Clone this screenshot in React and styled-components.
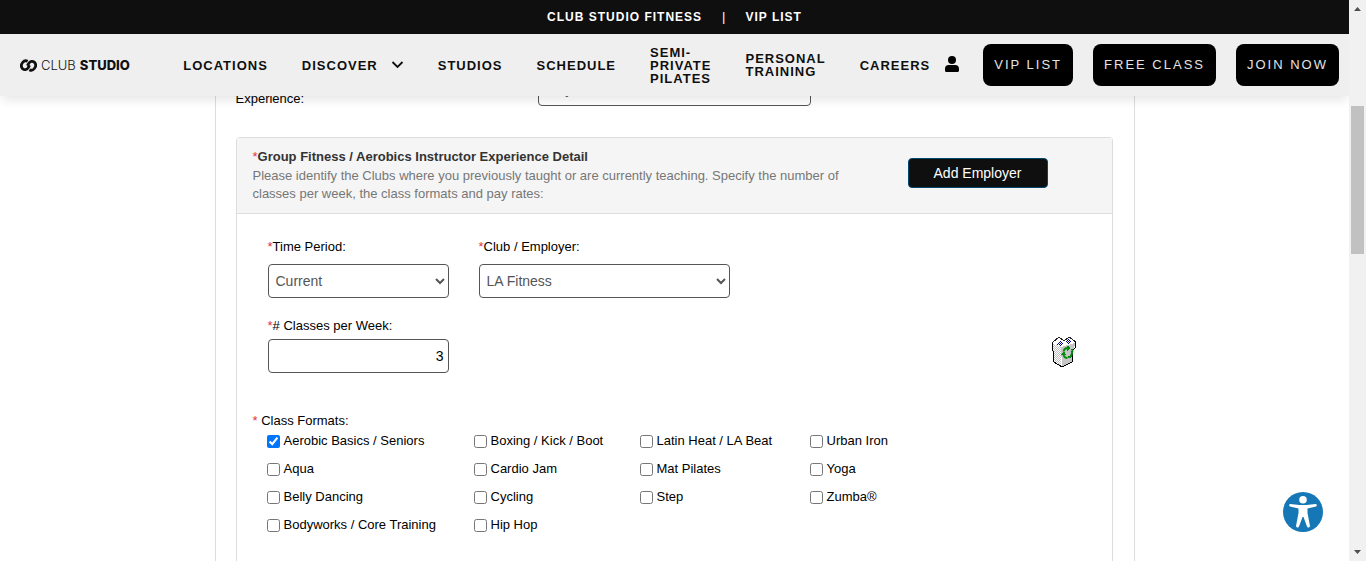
import React from "react";
import styled, { createGlobalStyle } from "styled-components";

const GlobalStyle = createGlobalStyle`
  *, *::before, *::after { box-sizing: border-box; }
  body {
    margin: 0;
    background: #fff;
    color: #000;
    font-family: "Liberation Sans", Arial, sans-serif;
    font-size: 13px;
    line-height: 18px;
  }
`;

const Shell = styled.div`
  display: flex;
  height: 100vh;
  overflow: hidden;
`;

const Page = styled.div`
  flex: 1;
  min-width: 0;
  display: flex;
  flex-direction: column;
  overflow: hidden;
`;

const Header = styled.header`
  position: relative;
  z-index: 2;
  flex: none;
  box-shadow: 0 6px 10px -2px rgba(0, 0, 0, 0.1);
`;

const TopBar = styled.div`
  display: flex;
  justify-content: center;
  align-items: center;
  gap: 20px;
  height: 34px;
  background: #0f0f0f;
  color: #fff;
`;

const TopLink = styled.a`
  color: inherit;
  font: 700 12px/18px "Liberation Sans", Arial, sans-serif;
  letter-spacing: 1px;
  text-decoration: none;
`;

const NavBar = styled.div`
  display: flex;
  align-items: center;
  height: 62px;
  padding: 0 10px 0 20px;
  background: #efefef;
`;

const Logo = styled.a`
  display: flex;
  align-items: center;
  gap: 4px;
  color: #111;
  font: 300 13px/16px Inter, sans-serif;
  text-decoration: none;
  white-space: nowrap;
`;

const LogoStrong = styled.span`
  font-weight: 800;
`;

const NavLinks = styled.nav`
  display: flex;
  align-items: center;
  gap: 34px;
  margin-left: auto;
`;

const NavLink = styled.a`
  display: flex;
  align-items: center;
  gap: 13px;
  color: #0f0f0f;
  font: 700 13px/13px "Liberation Sans", Arial, sans-serif;
  letter-spacing: 1px;
  text-decoration: none;
  white-space: nowrap;
`;

const Account = styled.a`
  display: flex;
  margin: 0 24px 0 15px;
  color: #000;
`;

const Actions = styled.div`
  display: flex;
  gap: 20px;
`;

const ActionButton = styled.button`
  height: 42px;
  padding: 0 11px;
  border: 0;
  border-radius: 8px;
  background: #000;
  color: #e4e4e4;
  font: 400 13px/18px "Liberation Sans", Arial, sans-serif;
  letter-spacing: 2px;
  white-space: nowrap;
`;

const Content = styled.main`
  flex: 1;
  display: flex;
  flex-direction: column;
  width: 100%;
  max-width: 920px;
  margin: -24px auto 0;
  padding: 0 21px 0 20px;
  border: solid #ddd;
  border-width: 0 1px;
`;

const ExperienceRow = styled.div`
  display: grid;
  grid-template-columns: 302px 273px;
  align-items: start;
  margin-bottom: 29px;
`;

const Label = styled.label`
  display: block;
`;

const ExperienceLabel = styled(Label)`
  padding-top: 18px;
`;

const Star = styled.span`
  color: #dc3545;
  font-weight: 400;
`;

const Select = styled.select`
  width: 100%;
  height: 34px;
  padding: 0 3px;
  border: 1px solid #555;
  border-radius: 4px;
  background: #fff;
  color: #555;
  font: 14px/20px "Liberation Sans", Arial, sans-serif;
`;

const NumberBox = styled.input`
  width: 100%;
  height: 34px;
  padding: 0 4px;
  border: 1px solid #555;
  border-radius: 4px;
  font: 14px/20px "Liberation Sans", Arial, sans-serif;
  text-align: right;
`;

const Card = styled.section`
  flex: 1;
  border: 1px solid #ddd;
  border-bottom: 0;
  border-radius: 4px 4px 0 0;
`;

const CardHeader = styled.div`
  display: flex;
  justify-content: space-between;
  align-items: center;
  padding: 10px 64px 10px 16px;
  border-bottom: 1px solid #ddd;
  background: #f5f5f5;
`;

const Intro = styled.div`
  max-width: 600px;
  color: #777;
`;

const Title = styled.h2`
  margin: 0 0 1px;
  color: #333;
  font-size: 13px;
  line-height: 18px;
`;

const AddButton = styled.button`
  width: 140px;
  height: 30px;
  margin-bottom: 6px;
  padding: 0;
  border: 1px solid #00486f;
  border-radius: 4px;
  background: #0f0f0f;
  color: #fff;
  font: 14px/20px "Liberation Sans", Arial, sans-serif;
`;

const CardBody = styled.div`
  padding: 24px 31px 0;
`;

const FieldRow = styled.div`
  display: grid;
  grid-template-columns: 181px 251px;
  gap: 30px;
  margin-bottom: 19px;
`;

const ClassesRow = styled.div`
  display: flex;
  justify-content: space-between;
  align-items: flex-end;
  margin-bottom: 39px;
`;

const Field = styled.div`
  display: flex;
  flex-direction: column;
  gap: ${(p) => p.$gap || 8}px;
  ${(p) => p.$width && `width: ${p.$width}px;`}
`;

const DeleteButton = styled.button`
  display: flex;
  margin: 0 4px 5px 0;
  padding: 0;
  border: 0;
  background: none;
`;

const Formats = styled.fieldset`
  margin: 0 0 0 -15px;
  padding: 0;
  border: 0;
`;

const Legend = styled.legend`
  padding: 0;
  margin-bottom: 2px;
`;

const FormatGrid = styled.div`
  display: grid;
  grid-template-columns: 207px 166px 170px 170px;
  row-gap: 10px;
  padding-left: 14px;
`;

const FormatOption = styled.label`
  display: flex;
  align-items: center;
  gap: 4px;
`;

const Checkbox = styled.input`
  width: 13px;
  height: 13px;
  margin: 0;
`;

const AccessButton = styled.button`
  position: fixed;
  right: 43px;
  bottom: 29px;
  display: flex;
  padding: 0;
  border: 0;
  border-radius: 50%;
  background: none;
`;

const Scrollbar = styled.div`
  display: flex;
  flex-direction: column;
  align-items: center;
  flex: none;
  width: 17px;
  background: #f1f1f1;
`;

const ScrollSpace = styled.div`
  flex: ${(p) => p.$grow};
`;

const Thumb = styled.div`
  flex: none;
  width: 13px;
  height: 148px;
  background: #c1c1c1;
`;

const Arrow = ({ down }) => (
  <svg width="17" height="17" viewBox="0 0 17 17" aria-hidden="true">
    <path d={down ? "M5 6h7L8.500 10z" : "M5 11h7L8.500 7z"} fill="#505050" />
  </svg>
);

const LogoMark = () => (
  <svg width="17" height="13" viewBox="0 0 17 13" fill="none" stroke="#111" strokeWidth="2.800" aria-hidden="true">
    <path d="M7.600 2.300C5.600 1.100 3.800 2 2.600 3.500 1 5.500 1 8 2.600 9.700 4.400 11.400 6.700 10.800 8 9L9.600 6.200" />
    <path d="M9.400 10.700C11.400 11.900 13.200 11 14.400 9.500 16 7.500 16 5 14.400 3.300 12.600 1.600 10.300 2.200 9 4L7.400 6.800" />
  </svg>
);

const Chevron = () => (
  <svg width="13" height="8" viewBox="0 0 13 8" fill="none" stroke="#0f0f0f" strokeWidth="1.800" aria-hidden="true">
    <path d="M1.500 1l5 5 5-5" />
  </svg>
);

const UserIcon = () => (
  <svg width="14" height="18" viewBox="0 0 14 18" fill="currentColor" aria-hidden="true">
    <circle cx="7" cy="4" r="4" />
    <path d="M3.800 9h6.400A3.800 3.800 0 0 1 14 12.800v1.700c0 .8-.7 1.500-1.500 1.500h-11A1.500 1.500 0 0 1 0 14.500v-1.700A3.800 3.800 0 0 1 3.800 9z" />
  </svg>
);

const TrashIcon = () => (
  <svg width="26" height="32" viewBox="0 0 26 32" shapeRendering="crispEdges" aria-hidden="true">
    <defs>
      <pattern id="dither" width="2" height="2" patternUnits="userSpaceOnUse">
        <rect width="2" height="2" fill="#fff" />
        <rect width="1" height="1" fill="#c0c0c0" />
        <rect x="1" y="1" width="1" height="1" fill="#c0c0c0" />
      </pattern>
      <pattern id="bluedots" width="2" height="2" patternUnits="userSpaceOnUse">
        <rect width="2" height="2" fill="#fff" />
        <rect width="1" height="1" fill="#000090" />
        <rect x="1" y="1" width="1" height="1" fill="#000090" />
      </pattern>
    </defs>
    <path d="M1 7L8 1l5 3 5-3 6 5-1 7-2 13-10 5-8-5z" fill="#fff" />
    <path d="M1 8l9 3v20l-7-5z" fill="url(#dither)" />
    <path d="M10 11l14-4-3 19-10 5z" fill="#c6c6c6" />
    <path d="M5 8l4-4 3 4-2 2zM14 6l3-3 4 3-4 2z" fill="url(#bluedots)" />
    <path d="M1 7L8 1l5 4 5-4 7 5" fill="none" stroke="#222" />
    <path d="M1 7v7l1 1 1 11 8 5 10-5 1-12 2-2V6" fill="none" stroke="#000" />
    <g shapeRendering="auto" fill="none" stroke="#078a10" strokeWidth="1.800">
      <path d="M12.500 15.500c.5-2 2-3.500 4-3.500M20.500 14.500c1 2 .8 4-.8 5.500M16.500 22c-2 0-3.500-1-4-3" />
    </g>
    <path d="M16 9.500l4 2.500-4 3zM21 18.500l-1 4-4-1.500zM10 18.500l3-3 2.500 4zM19 13h3v3z" fill="#078a10" />
  </svg>
);

const AccessIcon = () => (
  <svg width="40" height="40" viewBox="0 0 40 40" aria-hidden="true">
    <circle cx="20" cy="20" r="20" fill="#1577b5" />
    <circle cx="20" cy="7.700" r="3.800" fill="#fff" />
    <path d="M7.300 12.100L16.500 13h7L32.700 12.100a1.300 1.300 0 0 1 .3 2.500L24.500 16.500V21l2.400 12.500a1.500 1.500 0 0 1-2.900.9L20.500 25h-1L16 34.400a1.500 1.500 0 0 1-2.900-.9L15.500 21v-4.500L7 14.600a1.300 1.300 0 0 1 .3-2.500z" fill="#fff" />
  </svg>
);

const formats = [
  "Aerobic Basics / Seniors", "Boxing / Kick / Boot", "Latin Heat / LA Beat", "Urban Iron",
  "Aqua", "Cardio Jam", "Mat Pilates", "Yoga",
  "Belly Dancing", "Cycling", "Step", "Zumba®",
  "Bodyworks / Core Training", "Hip Hop",
];

export default function App() {
  return (
    <Shell>
      <GlobalStyle />
      <Page>
        <Header>
          <TopBar>
            <TopLink href="#club">CLUB STUDIO FITNESS</TopLink>
            <span>|</span>
            <TopLink href="#vip">VIP LIST</TopLink>
          </TopBar>
          <NavBar>
            <Logo href="#home">
              <LogoMark />
              <span>CLUB</span>
              <LogoStrong>STUDIO</LogoStrong>
            </Logo>
            <NavLinks>
              <NavLink href="#locations">LOCATIONS</NavLink>
              <NavLink href="#discover">DISCOVER <Chevron /></NavLink>
              <NavLink href="#studios">STUDIOS</NavLink>
              <NavLink href="#schedule">SCHEDULE</NavLink>
              <NavLink href="#pilates"><span>SEMI-<br />PRIVATE<br />PILATES</span></NavLink>
              <NavLink href="#training"><span>PERSONAL<br />TRAINING</span></NavLink>
              <NavLink href="#careers">CAREERS</NavLink>
            </NavLinks>
            <Account href="#account" aria-label="Account"><UserIcon /></Account>
            <Actions>
              <ActionButton>VIP LIST</ActionButton>
              <ActionButton>FREE CLASS</ActionButton>
              <ActionButton>JOIN NOW</ActionButton>
            </Actions>
          </NavBar>
        </Header>
        <Content>
          <ExperienceRow>
            <ExperienceLabel htmlFor="experience">Experience:</ExperienceLabel>
            <Select id="experience" defaultValue="2+ years">
              <option>2+ years</option>
            </Select>
          </ExperienceRow>
          <Card>
            <CardHeader>
              <Intro>
                <Title><Star>*</Star>Group Fitness / Aerobics Instructor Experience Detail</Title>
                Please identify the Clubs where you previously taught or are currently teaching. Specify the number of classes per week, the class formats and pay rates:
              </Intro>
              <AddButton type="button">Add Employer</AddButton>
            </CardHeader>
            <CardBody>
              <FieldRow>
                <Field>
                  <Label htmlFor="period"><Star>*</Star>Time Period:</Label>
                  <Select id="period"><option>Current</option></Select>
                </Field>
                <Field>
                  <Label htmlFor="employer"><Star>*</Star>Club / Employer:</Label>
                  <Select id="employer"><option>LA Fitness</option></Select>
                </Field>
              </FieldRow>
              <ClassesRow>
                <Field $gap={4} $width={181}>
                  <Label htmlFor="classes"><Star>*</Star># Classes per Week:</Label>
                  <NumberBox id="classes" type="text" defaultValue="3" />
                </Field>
                <DeleteButton type="button" aria-label="Delete employer"><TrashIcon /></DeleteButton>
              </ClassesRow>
              <Formats>
                <Legend><Star>*</Star> Class Formats:</Legend>
                <FormatGrid>
                  {formats.map((name, i) => (
                    <FormatOption key={name}>
                      <Checkbox type="checkbox" defaultChecked={i === 0} />
                      {name}
                    </FormatOption>
                  ))}
                </FormatGrid>
              </Formats>
            </CardBody>
          </Card>
        </Content>
      </Page>
      <Scrollbar>
        <Arrow />
        <ScrollSpace $grow={89} />
        <Thumb />
        <ScrollSpace $grow={290} />
        <Arrow down />
      </Scrollbar>
      <AccessButton type="button" aria-label="Accessibility options"><AccessIcon /></AccessButton>
    </Shell>
  );
}
